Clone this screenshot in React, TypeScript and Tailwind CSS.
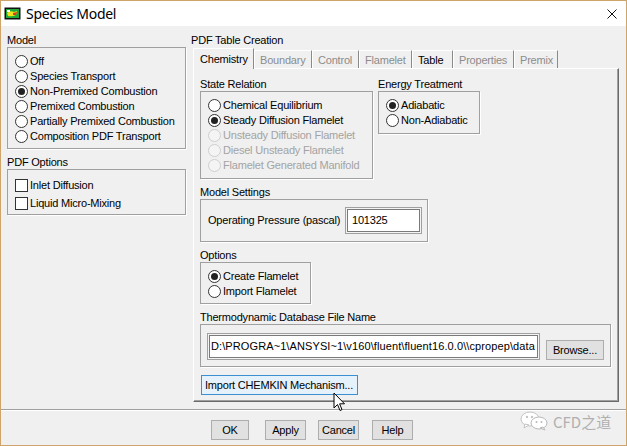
import React from 'react'

function Radio({ label, checked, disabled }: { label: string; checked?: boolean; disabled?: boolean }) {
  return (
    <div className="flex items-center h-[15px]">
      <span
        className={`w-[13px] h-[13px] rounded-full border flex items-center justify-center shrink-0 ${
          disabled ? 'border-[#cfcfcf] bg-[#f4f4f4]' : 'border-[#333333] bg-white'
        }`}
      >
        {checked && <span className="w-[7px] h-[7px] rounded-full bg-[#222222]" />}
      </span>
      <span className={`ml-[2px] whitespace-nowrap ${disabled ? 'text-[#a3a3a3]' : ''}`}>{label}</span>
    </div>
  )
}

function Check({ label }: { label: string }) {
  return (
    <div className="flex items-center h-[18px]">
      <span className="w-[13px] h-[13px] border border-[#333333] bg-white shrink-0" />
      <span className="ml-[2px] whitespace-nowrap">{label}</span>
    </div>
  )
}

function Group({ title, box, children }: { title: string; box: string; children: React.ReactNode }) {
  return (
    <div>
      <div className="h-[13px] leading-[13px] whitespace-nowrap">{title}</div>
      <div className={`border border-[#a0a0a0] shadow-[1px_1px_0_#ffffff] ${box}`}>{children}</div>
    </div>
  )
}

function Btn({ label, className }: { label: string; className?: string }) {
  return (
    <div
      className={`h-[20px] border border-[#adadad] bg-[#e1e1e1] flex items-center justify-center ${className ?? ''}`}
    >
      {label}
    </div>
  )
}

const tabs = [
  { name: 'Chemistry', w: 'w-[61px]', on: true },
  { name: 'Boundary', w: 'w-[58px]' },
  { name: 'Control', w: 'w-[47px]' },
  { name: 'Flamelet', w: 'w-[53px]' },
  { name: 'Table', w: 'w-[41px]', dark: true },
  { name: 'Properties', w: 'w-[61px]' },
  { name: 'Premix', w: 'w-[44px]' },
]

export default function App() {
  return (
    <div className="relative w-[627px] h-[446px] overflow-hidden bg-[#f0f0f0] border border-[#cfa46b] font-['Liberation_Sans',Arial,sans-serif] text-[11px] tracking-[-0.2px] text-black">
      {/* title bar */}
      <div className="h-[25px] bg-white flex items-center">
        <svg className="ml-[3px]" width="17" height="13" viewBox="0 0 17 13">
          <rect x="0.5" y="0.5" width="16" height="12" fill="#111" />
          <rect x="2" y="2" width="13" height="9" fill="#1fa83a" />
          <path d="M3 6 Q6 3 10 5 L13 4 L12 8 Q8 10 4 9 Z" fill="#f2e21a" />
          <path d="M9 6 L13 5 L12 8 L9 8 Z" fill="#e03a1e" />
          <rect x="3" y="3" width="3" height="2" fill="#ffffff" />
        </svg>
        <span className="ml-[5px] text-[14px] tracking-[-0.3px] font-['Noto_Sans','Noto_Sans_CJK_SC',sans-serif] leading-none">
          Species Model
        </span>
        <svg className="ml-auto mr-[9px]" width="10" height="10" viewBox="0 0 10 10">
          <path d="M0.5 0.5 L9.5 9.5 M9.5 0.5 L0.5 9.5" stroke="#111" strokeWidth="1" />
        </svg>
      </div>

      {/* main */}
      <div className="flex pt-[8px] pl-[6px]">
        <div className="w-[179px] shrink-0">
          <Group title="Model" box="h-[102px] pt-[6px] pl-[7px]">
            <Radio label="Off" />
            <Radio label="Species Transport" />
            <Radio label="Non-Premixed Combustion" checked />
            <Radio label="Premixed Combustion" />
            <Radio label="Partially Premixed Combustion" />
            <Radio label="Composition PDF Transport" />
          </Group>
          <div className="mt-[7px]">
            <Group title="PDF Options" box="h-[46px] pt-[6px] pl-[7px]">
              <Check label="Inlet Diffusion" />
              <Check label="Liquid Micro-Mixing" />
            </Group>
          </div>
        </div>

        <div className="ml-[5px]">
          <div className="h-[14px] leading-[13px] whitespace-nowrap">PDF Table Creation</div>
          <div className="ml-[2px]">
            <div className="relative z-10 flex items-end h-[21px] -mb-px">
              {tabs.map((t) =>
                t.on ? (
                  <div
                    key={t.name}
                    className={`${t.w} h-[21px] bg-[#f0f0f0] border-l border-t border-white border-r border-r-[#8a8a8a] pl-[6px] pt-[4px] leading-[13px]`}
                  >
                    {t.name}
                  </div>
                ) : (
                  <div
                    key={t.name}
                    className={`${t.w} h-[18px] mb-px border-l border-t border-white border-r border-r-[#8a8a8a] pl-[5px] pt-[3px] leading-[13px] ${
                      t.dark ? 'text-black' : 'text-[#8c8c8c]'
                    }`}
                  >
                    {t.name}
                  </div>
                )
              )}
            </div>
            <div className="w-[426px] h-[334px] border border-white border-r-[#6b6b6b] border-b-[#6b6b6b] shadow-[inset_-1px_-1px_0_#a0a0a0] pt-[9px] pl-[6px]">
              <div className="flex gap-[5px] items-start">
                <div className="w-[173px]">
                  <Group title="State Relation" box="h-[88px] pt-[6px] pl-[7px]">
                    <Radio label="Chemical Equilibrium" />
                    <Radio label="Steady Diffusion Flamelet" checked />
                    <Radio label="Unsteady Diffusion Flamelet" disabled />
                    <Radio label="Diesel Unsteady Flamelet" disabled />
                    <Radio label="Flamelet Generated Manifold" disabled />
                  </Group>
                </div>
                <div className="w-[102px]">
                  <Group title="Energy Treatment" box="h-[43px] pt-[6px] pl-[7px]">
                    <Radio label="Adiabatic" checked />
                    <Radio label="Non-Adiabatic" />
                  </Group>
                </div>
              </div>

              <div className="mt-[7px] w-[228px]">
                <Group title="Model Settings" box="h-[43px] flex items-center pl-[7px]">
                  <span className="w-[137px] whitespace-nowrap">Operating Pressure (pascal)</span>
                  <div className="w-[77px] h-[27px] border border-[#a0a0a0] bg-white shadow-[inset_0_0_0_1px_#f4f4f4,inset_0_0_0_2px_#7a7a7a] flex items-center pl-[6px]">
                    101325
                  </div>
                </Group>
              </div>

              <div className="mt-[7px] w-[111px]">
                <Group title="Options" box="h-[42px] pt-[6px] pl-[7px]">
                  <Radio label="Create Flamelet" checked />
                  <Radio label="Import Flamelet" />
                </Group>
              </div>

              <div className="mt-[7px] w-[411px]">
                <Group title="Thermodynamic Database File Name" box="h-[43px] flex items-end pb-[6px] pl-[6px]">
                  <div className="w-[333px] h-[27px] border border-[#a0a0a0] bg-white shadow-[inset_0_0_0_1px_#f4f4f4,inset_0_0_0_2px_#7a7a7a] flex items-center pl-[3px] overflow-hidden whitespace-nowrap tracking-[0.1px]">
                    D:\PROGRA~1\ANSYSI~1\v160\fluent\fluent16.0.0\\cpropep\data
                  </div>
                  <Btn label="Browse..." className="w-[58px] h-[19px] ml-[6px]" />
                </Group>
              </div>

              <div className="mt-[8px] ml-[1px] w-[157px] h-[20px] border border-[#3c8fd0] bg-[#e5f1fb] flex items-center pl-[3px] whitespace-nowrap">
                Import CHEMKIN Mechanism...
              </div>
            </div>
          </div>
        </div>
      </div>

      {/* separator */}
      <div className="mt-[7px] border-t border-[#a0a0a0] border-b border-b-white" />

      {/* bottom buttons */}
      <div className="flex mt-[9px] pl-[210px]">
        <Btn label="OK" className="w-[38px]" />
        <Btn label="Apply" className="w-[41px] ml-[16px]" />
        <Btn label="Cancel" className="w-[41px] ml-[12px]" />
        <Btn label="Help" className="w-[41px] ml-[13px]" />
      </div>

      {/* watermark */}
      <div className="absolute left-[519px] top-[410px] flex items-center">
        <svg width="30" height="20" viewBox="0 0 30 20">
          <ellipse cx="10" cy="8" rx="9" ry="7" fill="#ffffff" stroke="#c4c4c4" strokeWidth="1" />
          <path d="M5 13 L4 17 L9 14 Z" fill="#ffffff" stroke="#c4c4c4" strokeWidth="1" />
          <ellipse cx="19" cy="12" rx="8" ry="6" fill="#ffffff" stroke="#b8b8b8" strokeWidth="1" />
          <path d="M23 16 L25 19 L20 17 Z" fill="#ffffff" stroke="#b8b8b8" strokeWidth="1" />
          <circle cx="7" cy="6" r="1.2" fill="#c4c4c4" />
          <circle cx="12" cy="6" r="1.2" fill="#c4c4c4" />
          <circle cx="16.5" cy="11" r="1" fill="#b8b8b8" />
          <circle cx="21.5" cy="11" r="1" fill="#b8b8b8" />
        </svg>
        <span className="ml-[3px] text-[15px] tracking-[0px] text-[#b0b0b0] font-['Noto_Sans_CJK_SC','Noto_Sans',sans-serif] leading-none">
          CFD之道
        </span>
      </div>

      {/* mouse pointer */}
      <svg className="absolute left-[332px] top-[391px]" width="13" height="21" viewBox="0 0 13 21">
        <path
          d="M1 1 L1 16 L4.5 12.5 L7 18.5 L9 17.6 L6.6 11.8 L11.5 11.8 Z"
          fill="#ffffff"
          stroke="#000000"
          strokeWidth="1"
          strokeLinejoin="round"
        />
      </svg>
    </div>
  )
}
